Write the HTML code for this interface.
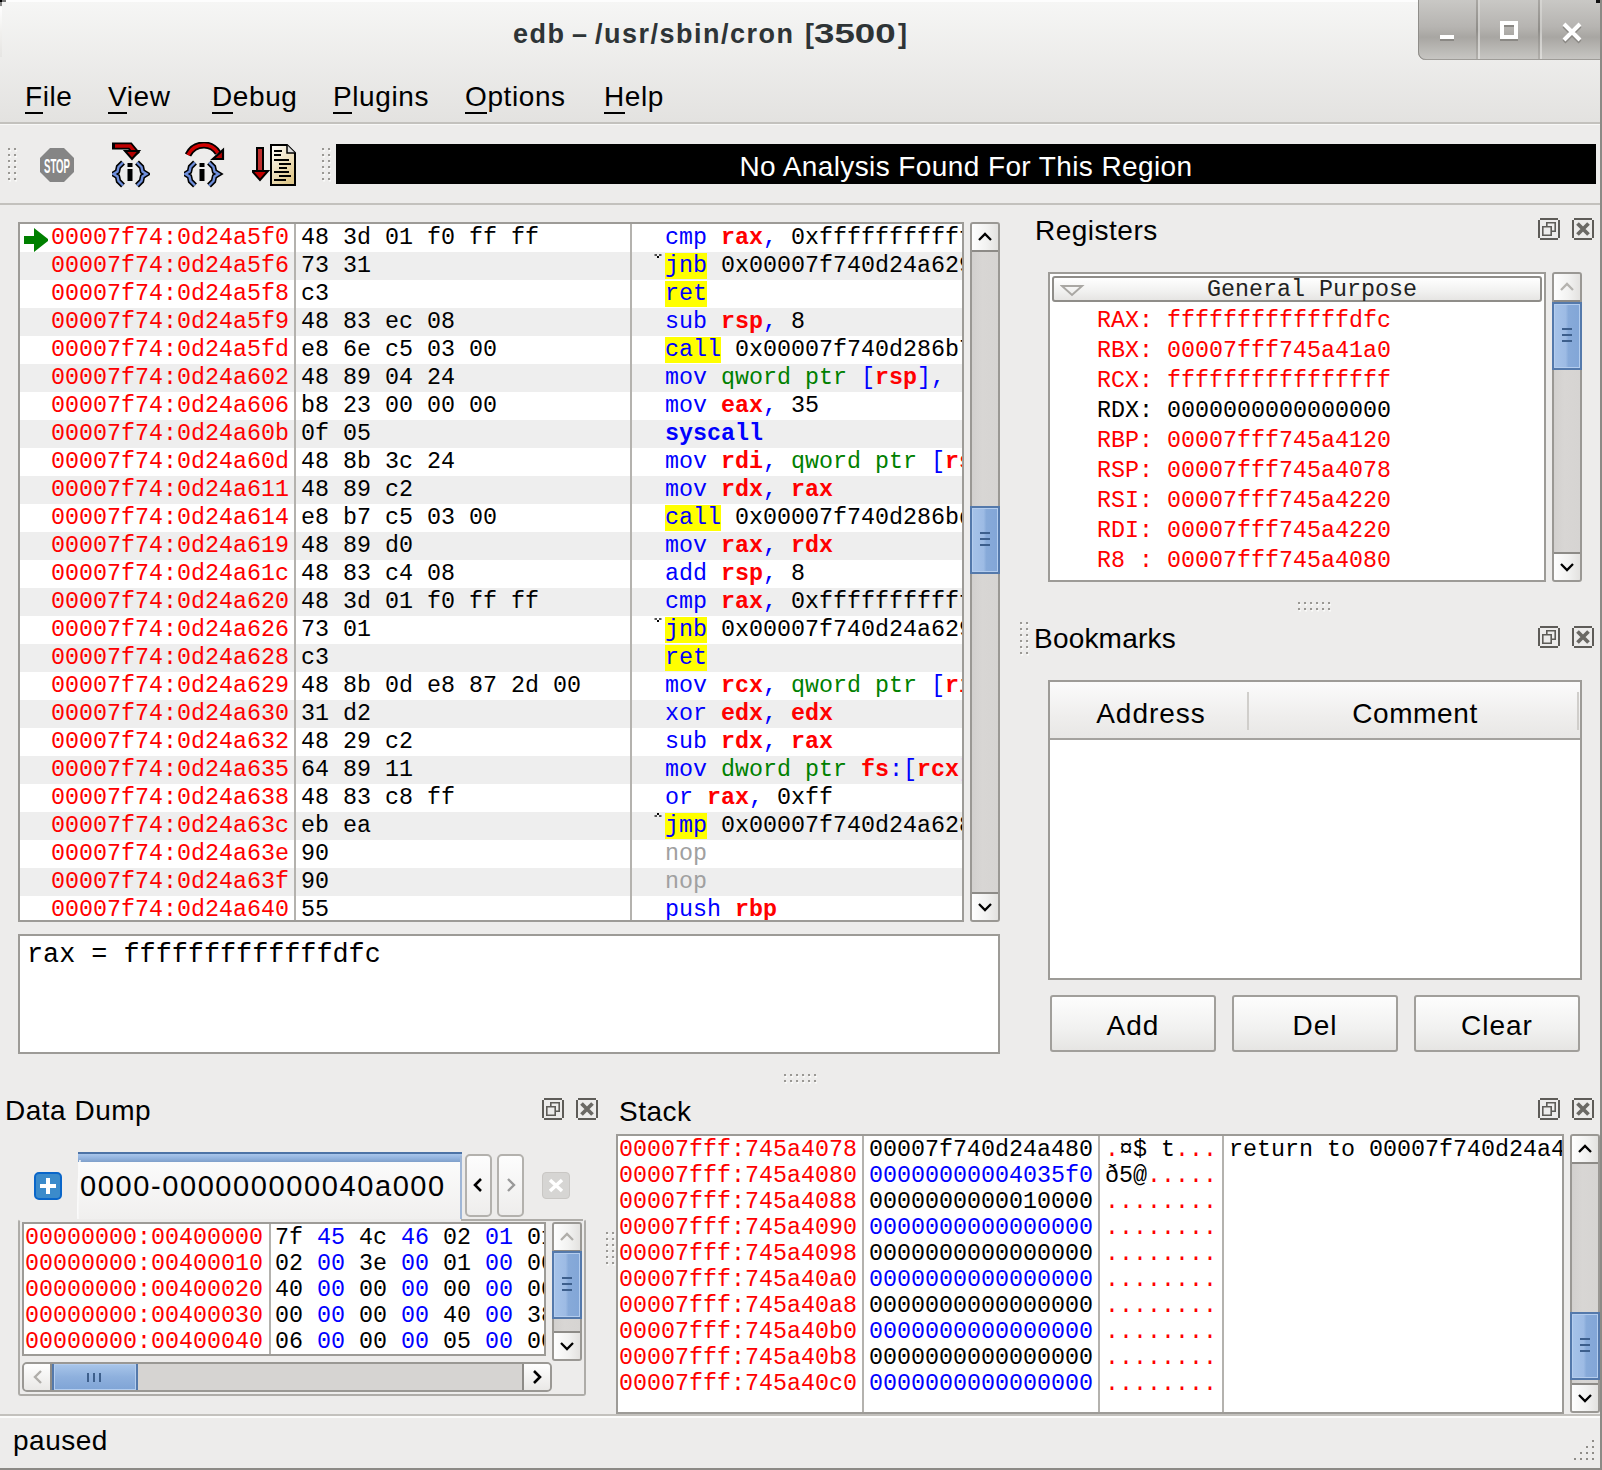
<!DOCTYPE html><html><head><meta charset="utf-8"><style>
*{box-sizing:border-box;margin:0;padding:0}
html,body{width:1602px;height:1470px;overflow:hidden;background:#edeceb}
body{position:relative;font-family:"Liberation Sans",sans-serif;color:#000}
.a{position:absolute}
.m{font-family:"Liberation Mono",monospace;font-size:23.33px;white-space:pre;line-height:28px}
.ui{font-family:"Liberation Sans",sans-serif;font-size:28px;white-space:pre;letter-spacing:0.5px;line-height:32px}
.menu{top:81px;letter-spacing:0.6px}
.menu u{text-decoration:none;border-bottom:2px solid #000;padding-bottom:0px}
.frame{border:2px solid #9d9b97;background:#fff;overflow:hidden}
.r{color:#f00}.b{color:#00f}.g{color:#008000}.k{color:#000}.gy{color:#a0a0a0}
.bo{font-weight:bold}
.hl{background:#ff0}
.row{position:absolute;left:0;height:28px;width:100%}
.alt{background:#eeeeee}
.sbv{position:absolute;border:2px solid #9d9b97;background:#d6d4d2;border-radius:4px}
.sbbtn{position:absolute;left:0;width:100%;background:linear-gradient(90deg,#fff,#f3f3f2 50%,#e2e1df);}
.thumb{position:absolute;background:linear-gradient(90deg,#a6c3e9,#9dbbe4 45%,#87aad9 55%,#82a6d7);border:2px solid #5479ab;box-shadow:inset 0 0 0 1px #b4cdee}
.dockic{position:absolute;width:22px;height:22px;border:2px solid #5e5c58;border-radius:2px}
</style></head><body>
<div class="a" style="left:0;top:0;width:1602px;height:123px;background:linear-gradient(#f6f6f5,#e3e2e0)"></div>
<div class="a" style="left:513px;top:19px;line-height:30px;font-weight:bold;font-size:27px;letter-spacing:1.5px;color:#2e3436;white-space:pre;transform:scaleX(1);transform-origin:0 0">edb</div>
<div class="a" style="left:572px;top:19px;line-height:30px;font-weight:bold;font-size:27px;letter-spacing:0px;color:#2e3436;white-space:pre;transform:scaleX(1);transform-origin:0 0">–</div>
<div class="a" style="left:595px;top:19px;line-height:30px;font-weight:bold;font-size:27px;letter-spacing:1.5px;color:#2e3436;white-space:pre;transform:scaleX(1);transform-origin:0 0">/usr/sbin/cron</div>
<div class="a" style="left:805px;top:19px;line-height:30px;font-weight:bold;font-size:27px;letter-spacing:0px;color:#2e3436;white-space:pre;transform:scaleX(1);transform-origin:0 0">[</div>
<div class="a" style="left:814px;top:19px;line-height:30px;font-weight:bold;font-size:27px;letter-spacing:0px;color:#2e3436;white-space:pre;transform:scaleX(1.36);transform-origin:0 0">3500</div>
<div class="a" style="left:898px;top:19px;line-height:30px;font-weight:bold;font-size:27px;letter-spacing:0px;color:#2e3436;white-space:pre;transform:scaleX(1);transform-origin:0 0">]</div>
<div class="a" id="wb" style="left:1418px;top:0;width:182px;height:60px;border-bottom-left-radius:8px;background:linear-gradient(#c9c8c5,#b6b4b1 45%,#a8a6a2 62%,#c8c7c4);box-shadow:inset 1px 0 0 #8f8d89, inset 0 -1px 0 #9e9c98"></div>
<div class="a ui menu" style="left:25px"><u>F</u>ile</div>
<div class="a ui menu" style="left:108px"><u>V</u>iew</div>
<div class="a ui menu" style="left:212px"><u>D</u>ebug</div>
<div class="a ui menu" style="left:333px"><u>P</u>lugins</div>
<div class="a ui menu" style="left:465px"><u>O</u>ptions</div>
<div class="a ui menu" style="left:604px"><u>H</u>elp</div>
<div class="a" style="left:0;top:122px;width:1600px;height:2px;background:#c3c1bd"></div>
<div class="a" style="left:0;top:124px;width:1600px;height:1px;background:#f8f8f7"></div>
<div class="a" style="left:0;top:203px;width:1600px;height:2px;background:#c3c1bd"></div>
<div class="a" style="left:336px;top:144px;width:1260px;height:40px;background:#000"></div>
<div class="a ui" style="left:336px;top:151px;width:1260px;text-align:center;color:#fff;letter-spacing:0.4px">No Analysis Found For This Region</div>
<svg class="a" style="left:8px;top:148px" width="12" height="36"><rect x="1" y="2" width="2" height="1.5" fill="#fbfbfa"/><rect x="0" y="0" width="2" height="2" fill="#9a9894"/><rect x="1" y="8" width="2" height="1.5" fill="#fbfbfa"/><rect x="0" y="6" width="2" height="2" fill="#9a9894"/><rect x="1" y="14" width="2" height="1.5" fill="#fbfbfa"/><rect x="0" y="12" width="2" height="2" fill="#9a9894"/><rect x="1" y="20" width="2" height="1.5" fill="#fbfbfa"/><rect x="0" y="18" width="2" height="2" fill="#9a9894"/><rect x="1" y="26" width="2" height="1.5" fill="#fbfbfa"/><rect x="0" y="24" width="2" height="2" fill="#9a9894"/><rect x="1" y="32" width="2" height="1.5" fill="#fbfbfa"/><rect x="0" y="30" width="2" height="2" fill="#9a9894"/><rect x="7" y="2" width="2" height="1.5" fill="#fbfbfa"/><rect x="6" y="0" width="2" height="2" fill="#9a9894"/><rect x="7" y="8" width="2" height="1.5" fill="#fbfbfa"/><rect x="6" y="6" width="2" height="2" fill="#9a9894"/><rect x="7" y="14" width="2" height="1.5" fill="#fbfbfa"/><rect x="6" y="12" width="2" height="2" fill="#9a9894"/><rect x="7" y="20" width="2" height="1.5" fill="#fbfbfa"/><rect x="6" y="18" width="2" height="2" fill="#9a9894"/><rect x="7" y="26" width="2" height="1.5" fill="#fbfbfa"/><rect x="6" y="24" width="2" height="2" fill="#9a9894"/><rect x="7" y="32" width="2" height="1.5" fill="#fbfbfa"/><rect x="6" y="30" width="2" height="2" fill="#9a9894"/></svg>
<svg class="a" style="left:322px;top:148px" width="12" height="36"><rect x="1" y="2" width="2" height="1.5" fill="#fbfbfa"/><rect x="0" y="0" width="2" height="2" fill="#9a9894"/><rect x="1" y="8" width="2" height="1.5" fill="#fbfbfa"/><rect x="0" y="6" width="2" height="2" fill="#9a9894"/><rect x="1" y="14" width="2" height="1.5" fill="#fbfbfa"/><rect x="0" y="12" width="2" height="2" fill="#9a9894"/><rect x="1" y="20" width="2" height="1.5" fill="#fbfbfa"/><rect x="0" y="18" width="2" height="2" fill="#9a9894"/><rect x="1" y="26" width="2" height="1.5" fill="#fbfbfa"/><rect x="0" y="24" width="2" height="2" fill="#9a9894"/><rect x="1" y="32" width="2" height="1.5" fill="#fbfbfa"/><rect x="0" y="30" width="2" height="2" fill="#9a9894"/><rect x="7" y="2" width="2" height="1.5" fill="#fbfbfa"/><rect x="6" y="0" width="2" height="2" fill="#9a9894"/><rect x="7" y="8" width="2" height="1.5" fill="#fbfbfa"/><rect x="6" y="6" width="2" height="2" fill="#9a9894"/><rect x="7" y="14" width="2" height="1.5" fill="#fbfbfa"/><rect x="6" y="12" width="2" height="2" fill="#9a9894"/><rect x="7" y="20" width="2" height="1.5" fill="#fbfbfa"/><rect x="6" y="18" width="2" height="2" fill="#9a9894"/><rect x="7" y="26" width="2" height="1.5" fill="#fbfbfa"/><rect x="6" y="24" width="2" height="2" fill="#9a9894"/><rect x="7" y="32" width="2" height="1.5" fill="#fbfbfa"/><rect x="6" y="30" width="2" height="2" fill="#9a9894"/></svg>
<svg class="a" style="left:40px;top:148px" width="34" height="34" viewBox="0 0 34 34"><path d="M10 0H24L34 10V24L24 34H10L0 24V10Z" fill="#858585"/><text x="4" y="25" font-family="Liberation Sans" font-weight="bold" font-size="20" fill="#fff" textLength="26" lengthAdjust="spacingAndGlyphs">STOP</text></svg>
<svg class="a" style="left:112px;top:142px" width="38" height="46" viewBox="0 0 38 46"><path d="M2 4H18L23 10" fill="none" stroke="#000" stroke-width="7" stroke-linecap="square"/><path d="M3 4H18L23 10" fill="none" stroke="#c00000" stroke-width="3.5"/><path d="M13 9H27L20 17Z" fill="#b00000" stroke="#000" stroke-width="2" stroke-linejoin="miter"/><g transform="translate(0,19)"><g transform="translate(0,0)"><g fill="none" stroke-linejoin="miter" stroke-linecap="butt"><polyline points="11,1.5 6.5,6 5.5,10.5 1.5,13 5.5,15.5 6.5,20 11,24.5" stroke="#000" stroke-width="5.5"/><polyline points="11,1.5 6.5,6 5.5,10.5 1.5,13 5.5,15.5 6.5,20 11,24.5" stroke="#6f8fdc" stroke-width="2.4"/><polyline points="25,1.5 29.5,6 30.5,10.5 34.5,13 30.5,15.5 29.5,20 25,24.5" stroke="#000" stroke-width="5.5"/><polyline points="25,1.5 29.5,6 30.5,10.5 34.5,13 30.5,15.5 29.5,20 25,24.5" stroke="#6f8fdc" stroke-width="2.4"/></g><rect x="15.5" y="2" width="5" height="4" fill="#000"/><rect x="15.5" y="8" width="5" height="12" fill="#000"/></g></g></svg>
<svg class="a" style="left:184px;top:142px" width="42" height="46" viewBox="0 0 42 46"><path d="M4 13Q9 3 20 3Q29 3 34 11" fill="none" stroke="#000" stroke-width="7"/><path d="M4 13Q9 3 20 3Q29 3 34 11" fill="none" stroke="#d00000" stroke-width="3.5"/><path d="M39 8V17H29Z" fill="#b00000" stroke="#000" stroke-width="2.2"/><g transform="translate(0,19)"><g transform="translate(0,0)"><g fill="none" stroke-linejoin="miter" stroke-linecap="butt"><polyline points="11,1.5 6.5,6 5.5,10.5 1.5,13 5.5,15.5 6.5,20 11,24.5" stroke="#000" stroke-width="5.5"/><polyline points="11,1.5 6.5,6 5.5,10.5 1.5,13 5.5,15.5 6.5,20 11,24.5" stroke="#6f8fdc" stroke-width="2.4"/><polyline points="25,1.5 29.5,6 30.5,10.5 34.5,13 30.5,15.5 29.5,20 25,24.5" stroke="#000" stroke-width="5.5"/><polyline points="25,1.5 29.5,6 30.5,10.5 34.5,13 30.5,15.5 29.5,20 25,24.5" stroke="#6f8fdc" stroke-width="2.4"/></g><rect x="15.5" y="2" width="5" height="4" fill="#000"/><rect x="15.5" y="8" width="5" height="12" fill="#000"/></g></g></svg>
<svg class="a" style="left:252px;top:144px" width="46" height="44" viewBox="0 0 46 44"><rect x="5" y="4" width="6" height="24" fill="#c03030" stroke="#000" stroke-width="2"/><path d="M0 27H16L8 36Z" fill="#c00000" stroke="#000" stroke-width="2"/><defs><linearGradient id="dg" x1="0" y1="0" x2="0.6" y2="1"><stop offset="0" stop-color="#fff"/><stop offset="1" stop-color="#e0c98e"/></linearGradient></defs><path d="M19 1H35L43 9V41H19Z" fill="url(#dg)" stroke="#000" stroke-width="2"/><path d="M35 1V9H43" fill="#ddd" stroke="#000" stroke-width="1.5"/><g fill="#000"><rect x="22" y="6" width="8" height="2"/><rect x="22" y="10" width="7" height="2"/><rect x="22" y="15" width="15" height="2"/><rect x="27" y="19" width="12" height="2"/><rect x="27" y="23" width="8" height="2"/><rect x="22" y="27" width="15" height="2"/><rect x="27" y="31" width="12" height="2"/><rect x="22" y="35" width="12" height="2"/></g></svg>
<div class="a" style="left:1476px;top:0;width:2px;height:59px;background:linear-gradient(#a9a7a3,#8f8d89 50%,#b2b0ac)"></div><div class="a" style="left:1478px;top:0;width:2px;height:59px;background:linear-gradient(#d6d5d2,#c9c8c5 50%,#dcdbd8)"></div>
<div class="a" style="left:1538px;top:0;width:2px;height:59px;background:linear-gradient(#a9a7a3,#8f8d89 50%,#b2b0ac)"></div><div class="a" style="left:1540px;top:0;width:2px;height:59px;background:linear-gradient(#d6d5d2,#c9c8c5 50%,#dcdbd8)"></div>
<div class="a" style="left:1440px;top:37px;width:14px;height:4px;background:#8a8884"></div><div class="a" style="left:1440px;top:35px;width:14px;height:4px;background:#fff"></div>
<div class="a" style="left:1500px;top:23px;width:18px;height:18px;border:4px solid #8a8884"></div><div class="a" style="left:1500px;top:21px;width:18px;height:18px;border:4px solid #fff"></div>
<svg class="a" style="left:1560px;top:20px" width="24" height="24"><path d="M4 6L20 22M20 6L4 22" stroke="#8a8884" stroke-width="4"/><path d="M4 4L20 20M20 4L4 20" stroke="#fff" stroke-width="4"/></svg>
<div class="a frame" style="left:18px;top:222px;width:946px;height:700px">
<div class="row" style="top:0px"></div>
<div class="a m r" style="left:31px;top:0px">00007f74:0d24a5f0</div>
<div class="a m k" style="left:281px;top:0px">48 3d 01 f0 ff ff</div>
<div class="a m" style="left:645px;top:0px"><span class="b">cmp</span> <span class="r bo">rax</span><span class="b">,</span> <span class="k">0xfffffffffffff001</span></div>
<div class="row alt" style="top:28px"></div>
<div class="a m r" style="left:31px;top:28px">00007f74:0d24a5f6</div>
<div class="a m k" style="left:281px;top:28px">73 31</div>
<svg class="a" style="left:634px;top:30px" width="8" height="6"><rect x="3" y="2" width="2" height="2" fill="#000"/><rect x="0.5" y="0" width="2.5" height="2" fill="#555"/><rect x="5" y="0" width="2.5" height="2" fill="#555"/></svg>
<div class="a m" style="left:645px;top:28px"><span class="b hl">jnb</span> <span class="k">0x00007f740d24a629</span></div>
<div class="row" style="top:56px"></div>
<div class="a m r" style="left:31px;top:56px">00007f74:0d24a5f8</div>
<div class="a m k" style="left:281px;top:56px">c3</div>
<div class="a m" style="left:645px;top:56px"><span class="b hl">ret</span></div>
<div class="row alt" style="top:84px"></div>
<div class="a m r" style="left:31px;top:84px">00007f74:0d24a5f9</div>
<div class="a m k" style="left:281px;top:84px">48 83 ec 08</div>
<div class="a m" style="left:645px;top:84px"><span class="b">sub</span> <span class="r bo">rsp</span><span class="b">,</span> <span class="k">8</span></div>
<div class="row" style="top:112px"></div>
<div class="a m r" style="left:31px;top:112px">00007f74:0d24a5fd</div>
<div class="a m k" style="left:281px;top:112px">e8 6e c5 03 00</div>
<div class="a m" style="left:645px;top:112px"><span class="b hl">call</span> <span class="k">0x00007f740d286b70</span></div>
<div class="row alt" style="top:140px"></div>
<div class="a m r" style="left:31px;top:140px">00007f74:0d24a602</div>
<div class="a m k" style="left:281px;top:140px">48 89 04 24</div>
<div class="a m" style="left:645px;top:140px"><span class="b">mov</span> <span class="g">qword ptr</span> <span class="b">[</span><span class="r bo">rsp</span><span class="b">]</span><span class="b">,</span></div>
<div class="row" style="top:168px"></div>
<div class="a m r" style="left:31px;top:168px">00007f74:0d24a606</div>
<div class="a m k" style="left:281px;top:168px">b8 23 00 00 00</div>
<div class="a m" style="left:645px;top:168px"><span class="b">mov</span> <span class="r bo">eax</span><span class="b">,</span> <span class="k">35</span></div>
<div class="row alt" style="top:196px"></div>
<div class="a m r" style="left:31px;top:196px">00007f74:0d24a60b</div>
<div class="a m k" style="left:281px;top:196px">0f 05</div>
<div class="a m" style="left:645px;top:196px"><span class="b bo">syscall</span></div>
<div class="row" style="top:224px"></div>
<div class="a m r" style="left:31px;top:224px">00007f74:0d24a60d</div>
<div class="a m k" style="left:281px;top:224px">48 8b 3c 24</div>
<div class="a m" style="left:645px;top:224px"><span class="b">mov</span> <span class="r bo">rdi</span><span class="b">,</span> <span class="g">qword ptr</span> <span class="b">[</span><span class="r bo">rsp</span><span class="b">]</span></div>
<div class="row alt" style="top:252px"></div>
<div class="a m r" style="left:31px;top:252px">00007f74:0d24a611</div>
<div class="a m k" style="left:281px;top:252px">48 89 c2</div>
<div class="a m" style="left:645px;top:252px"><span class="b">mov</span> <span class="r bo">rdx</span><span class="b">,</span> <span class="r bo">rax</span></div>
<div class="row" style="top:280px"></div>
<div class="a m r" style="left:31px;top:280px">00007f74:0d24a614</div>
<div class="a m k" style="left:281px;top:280px">e8 b7 c5 03 00</div>
<div class="a m" style="left:645px;top:280px"><span class="b hl">call</span> <span class="k">0x00007f740d286bd0</span></div>
<div class="row alt" style="top:308px"></div>
<div class="a m r" style="left:31px;top:308px">00007f74:0d24a619</div>
<div class="a m k" style="left:281px;top:308px">48 89 d0</div>
<div class="a m" style="left:645px;top:308px"><span class="b">mov</span> <span class="r bo">rax</span><span class="b">,</span> <span class="r bo">rdx</span></div>
<div class="row" style="top:336px"></div>
<div class="a m r" style="left:31px;top:336px">00007f74:0d24a61c</div>
<div class="a m k" style="left:281px;top:336px">48 83 c4 08</div>
<div class="a m" style="left:645px;top:336px"><span class="b">add</span> <span class="r bo">rsp</span><span class="b">,</span> <span class="k">8</span></div>
<div class="row alt" style="top:364px"></div>
<div class="a m r" style="left:31px;top:364px">00007f74:0d24a620</div>
<div class="a m k" style="left:281px;top:364px">48 3d 01 f0 ff ff</div>
<div class="a m" style="left:645px;top:364px"><span class="b">cmp</span> <span class="r bo">rax</span><span class="b">,</span> <span class="k">0xfffffffffffff001</span></div>
<div class="row" style="top:392px"></div>
<div class="a m r" style="left:31px;top:392px">00007f74:0d24a626</div>
<div class="a m k" style="left:281px;top:392px">73 01</div>
<svg class="a" style="left:634px;top:394px" width="8" height="6"><rect x="3" y="2" width="2" height="2" fill="#000"/><rect x="0.5" y="0" width="2.5" height="2" fill="#555"/><rect x="5" y="0" width="2.5" height="2" fill="#555"/></svg>
<div class="a m" style="left:645px;top:392px"><span class="b hl">jnb</span> <span class="k">0x00007f740d24a629</span></div>
<div class="row alt" style="top:420px"></div>
<div class="a m r" style="left:31px;top:420px">00007f74:0d24a628</div>
<div class="a m k" style="left:281px;top:420px">c3</div>
<div class="a m" style="left:645px;top:420px"><span class="b hl">ret</span></div>
<div class="row" style="top:448px"></div>
<div class="a m r" style="left:31px;top:448px">00007f74:0d24a629</div>
<div class="a m k" style="left:281px;top:448px">48 8b 0d e8 87 2d 00</div>
<div class="a m" style="left:645px;top:448px"><span class="b">mov</span> <span class="r bo">rcx</span><span class="b">,</span> <span class="g">qword ptr</span> <span class="b">[</span><span class="r bo">rip</span></div>
<div class="row alt" style="top:476px"></div>
<div class="a m r" style="left:31px;top:476px">00007f74:0d24a630</div>
<div class="a m k" style="left:281px;top:476px">31 d2</div>
<div class="a m" style="left:645px;top:476px"><span class="b">xor</span> <span class="r bo">edx</span><span class="b">,</span> <span class="r bo">edx</span></div>
<div class="row" style="top:504px"></div>
<div class="a m r" style="left:31px;top:504px">00007f74:0d24a632</div>
<div class="a m k" style="left:281px;top:504px">48 29 c2</div>
<div class="a m" style="left:645px;top:504px"><span class="b">sub</span> <span class="r bo">rdx</span><span class="b">,</span> <span class="r bo">rax</span></div>
<div class="row alt" style="top:532px"></div>
<div class="a m r" style="left:31px;top:532px">00007f74:0d24a635</div>
<div class="a m k" style="left:281px;top:532px">64 89 11</div>
<div class="a m" style="left:645px;top:532px"><span class="b">mov</span> <span class="g">dword ptr</span> <span class="r bo">fs</span><span class="b">:</span><span class="b">[</span><span class="r bo">rcx</span><span class="b">]</span></div>
<div class="row" style="top:560px"></div>
<div class="a m r" style="left:31px;top:560px">00007f74:0d24a638</div>
<div class="a m k" style="left:281px;top:560px">48 83 c8 ff</div>
<div class="a m" style="left:645px;top:560px"><span class="b">or</span> <span class="r bo">rax</span><span class="b">,</span> <span class="k">0xff</span></div>
<div class="row alt" style="top:588px"></div>
<div class="a m r" style="left:31px;top:588px">00007f74:0d24a63c</div>
<div class="a m k" style="left:281px;top:588px">eb ea</div>
<svg class="a" style="left:634px;top:589px" width="8" height="6"><rect x="3" y="0" width="2" height="2" fill="#000"/><rect x="0.5" y="2" width="2.5" height="2" fill="#555"/><rect x="5" y="2" width="2.5" height="2" fill="#555"/></svg>
<div class="a m" style="left:645px;top:588px"><span class="b hl">jmp</span> <span class="k">0x00007f740d24a628</span></div>
<div class="row" style="top:616px"></div>
<div class="a m r" style="left:31px;top:616px">00007f74:0d24a63e</div>
<div class="a m k" style="left:281px;top:616px">90</div>
<div class="a m" style="left:645px;top:616px"><span class="gy">nop</span></div>
<div class="row alt" style="top:644px"></div>
<div class="a m r" style="left:31px;top:644px">00007f74:0d24a63f</div>
<div class="a m k" style="left:281px;top:644px">90</div>
<div class="a m" style="left:645px;top:644px"><span class="gy">nop</span></div>
<div class="row" style="top:672px"></div>
<div class="a m r" style="left:31px;top:672px">00007f74:0d24a640</div>
<div class="a m k" style="left:281px;top:672px">55</div>
<div class="a m" style="left:645px;top:672px"><span class="b">push</span> <span class="r bo">rbp</span></div>
<div class="a" style="left:274px;top:0;width:2px;height:700px;background:#b4b2ae"></div>
<div class="a" style="left:610px;top:0;width:2px;height:700px;background:#b4b2ae"></div>
<svg class="a" style="left:4px;top:4px" width="24" height="24" viewBox="0 0 24 24"><path d="M0 8H10V0L24 11V13L10 24V16H0Z" fill="#008000"/></svg>
</div>
<div class="a" style="left:970px;top:222px;width:30px;height:700px;border:2px solid #9a9894;border-radius:3px;background:linear-gradient(90deg,#d2d0ce,#d8d6d4 40%,#d6d4d2);overflow:hidden">
<div class="a" style="left:0;top:0;width:26px;height:28px;background:linear-gradient(90deg,#fefefe,#f2f2f1 55%,#e3e2e0);border-bottom:2px solid #8d8b87"></div>
<div class="a" style="left:0;top:668px;width:26px;height:28px;background:linear-gradient(90deg,#fefefe,#f2f2f1 55%,#e3e2e0);border-top:2px solid #8d8b87"></div>
<svg class="a" style="left:0;top:0" width="26" height="30"><polyline points="7.0,16.0 13.0,10.0 19.0,16.0" fill="none" stroke="#000" stroke-width="2.3"/></svg>
<svg class="a" style="left:0;top:668px" width="26" height="30"><polyline points="7.0,12.0 13.0,18.0 19.0,12.0" fill="none" stroke="#000" stroke-width="2.3"/></svg>
</div>
<div class="thumb" style="left:970px;top:506px;width:30px;height:68px"></div>
<div class="a" style="left:980.0px;top:532.0px;width:10px;height:2px;background:#3d5f8c"></div>
<div class="a" style="left:980.0px;top:538.0px;width:10px;height:2px;background:#3d5f8c"></div>
<div class="a" style="left:980.0px;top:544.0px;width:10px;height:2px;background:#3d5f8c"></div>
<div class="a frame" style="left:18px;top:934px;width:982px;height:120px"></div>
<div class="a m" style="left:27px;top:940px;font-size:26.8px;line-height:30px">rax = fffffffffffffdfc</div>
<div class="a ui" style="left:1035px;top:215px">Registers</div>
<svg class="a" style="left:1538px;top:218px" width="22" height="22" viewBox="0 0 22 22"><path d="M2 1H20M2 21H20M1 2V20M21 2V20" stroke="#5e5c58" stroke-width="2" fill="none"/><path d="M4.8 8.8H13.2V17.2H4.8Z M8.8 8.8V4.8H17.2V13.2H13.2" stroke="#5e5c58" stroke-width="1.6" fill="none"/></svg>
<svg class="a" style="left:1572px;top:218px" width="22" height="22" viewBox="0 0 22 22"><path d="M2 1H20M2 21H20M1 2V20M21 2V20" stroke="#5e5c58" stroke-width="2" fill="none"/><path d="M5.5 5.5L16.5 16.5M16.5 5.5L5.5 16.5" stroke="#6b6965" stroke-width="3.8" fill="none"/></svg>
<div class="a frame" style="left:1048px;top:272px;width:498px;height:310px">
<div class="a" style="left:2px;top:2px;width:490px;height:26px;border:2px solid #8f8d89;border-radius:3px;background:linear-gradient(#ffffff,#f1f1f0 60%,#e6e5e3)"></div>
<svg class="a" style="left:10px;top:10px" width="26" height="14"><path d="M2 2H22L12 11Z" fill="none" stroke="#a9a7a3" stroke-width="2"/></svg>
<div class="a m" style="left:157px;top:2px;font-size:23.33px;color:#222">General Purpose</div>
<div class="a m r" style="left:47px;top:33px">RAX: fffffffffffffdfc</div>
<div class="a m r" style="left:47px;top:63px">RBX: 00007fff745a41a0</div>
<div class="a m r" style="left:47px;top:93px">RCX: ffffffffffffffff</div>
<div class="a m k" style="left:47px;top:123px">RDX: 0000000000000000</div>
<div class="a m r" style="left:47px;top:153px">RBP: 00007fff745a4120</div>
<div class="a m r" style="left:47px;top:183px">RSP: 00007fff745a4078</div>
<div class="a m r" style="left:47px;top:213px">RSI: 00007fff745a4220</div>
<div class="a m r" style="left:47px;top:243px">RDI: 00007fff745a4220</div>
<div class="a m r" style="left:47px;top:273px">R8 : 00007fff745a4080</div>
</div>
<div class="a" style="left:1552px;top:272px;width:30px;height:310px;border:2px solid #9a9894;border-radius:3px;background:linear-gradient(90deg,#d2d0ce,#d8d6d4 40%,#d6d4d2);overflow:hidden">
<div class="a" style="left:0;top:0;width:26px;height:28px;background:linear-gradient(90deg,#fefefe,#f2f2f1 55%,#e3e2e0);border-bottom:2px solid #8d8b87"></div>
<div class="a" style="left:0;top:278px;width:26px;height:28px;background:linear-gradient(90deg,#fefefe,#f2f2f1 55%,#e3e2e0);border-top:2px solid #8d8b87"></div>
<svg class="a" style="left:0;top:0" width="26" height="30"><polyline points="7.0,16.0 13.0,10.0 19.0,16.0" fill="none" stroke="#b5b3af" stroke-width="2.3"/></svg>
<svg class="a" style="left:0;top:278px" width="26" height="30"><polyline points="7.0,12.0 13.0,18.0 19.0,12.0" fill="none" stroke="#000" stroke-width="2.3"/></svg>
</div>
<div class="thumb" style="left:1552px;top:302px;width:30px;height:68px"></div>
<div class="a" style="left:1562.0px;top:328.0px;width:10px;height:2px;background:#3d5f8c"></div>
<div class="a" style="left:1562.0px;top:334.0px;width:10px;height:2px;background:#3d5f8c"></div>
<div class="a" style="left:1562.0px;top:340.0px;width:10px;height:2px;background:#3d5f8c"></div>
<svg class="a" style="left:1298px;top:602px" width="36" height="12"><rect x="1" y="2" width="2" height="1.5" fill="#fbfbfa"/><rect x="0" y="0" width="2" height="2" fill="#9a9894"/><rect x="1" y="8" width="2" height="1.5" fill="#fbfbfa"/><rect x="0" y="6" width="2" height="2" fill="#9a9894"/><rect x="7" y="2" width="2" height="1.5" fill="#fbfbfa"/><rect x="6" y="0" width="2" height="2" fill="#9a9894"/><rect x="7" y="8" width="2" height="1.5" fill="#fbfbfa"/><rect x="6" y="6" width="2" height="2" fill="#9a9894"/><rect x="13" y="2" width="2" height="1.5" fill="#fbfbfa"/><rect x="12" y="0" width="2" height="2" fill="#9a9894"/><rect x="13" y="8" width="2" height="1.5" fill="#fbfbfa"/><rect x="12" y="6" width="2" height="2" fill="#9a9894"/><rect x="19" y="2" width="2" height="1.5" fill="#fbfbfa"/><rect x="18" y="0" width="2" height="2" fill="#9a9894"/><rect x="19" y="8" width="2" height="1.5" fill="#fbfbfa"/><rect x="18" y="6" width="2" height="2" fill="#9a9894"/><rect x="25" y="2" width="2" height="1.5" fill="#fbfbfa"/><rect x="24" y="0" width="2" height="2" fill="#9a9894"/><rect x="25" y="8" width="2" height="1.5" fill="#fbfbfa"/><rect x="24" y="6" width="2" height="2" fill="#9a9894"/><rect x="31" y="2" width="2" height="1.5" fill="#fbfbfa"/><rect x="30" y="0" width="2" height="2" fill="#9a9894"/><rect x="31" y="8" width="2" height="1.5" fill="#fbfbfa"/><rect x="30" y="6" width="2" height="2" fill="#9a9894"/></svg>
<svg class="a" style="left:1020px;top:622px" width="12" height="36"><rect x="1" y="2" width="2" height="1.5" fill="#fbfbfa"/><rect x="0" y="0" width="2" height="2" fill="#9a9894"/><rect x="1" y="8" width="2" height="1.5" fill="#fbfbfa"/><rect x="0" y="6" width="2" height="2" fill="#9a9894"/><rect x="1" y="14" width="2" height="1.5" fill="#fbfbfa"/><rect x="0" y="12" width="2" height="2" fill="#9a9894"/><rect x="1" y="20" width="2" height="1.5" fill="#fbfbfa"/><rect x="0" y="18" width="2" height="2" fill="#9a9894"/><rect x="1" y="26" width="2" height="1.5" fill="#fbfbfa"/><rect x="0" y="24" width="2" height="2" fill="#9a9894"/><rect x="1" y="32" width="2" height="1.5" fill="#fbfbfa"/><rect x="0" y="30" width="2" height="2" fill="#9a9894"/><rect x="7" y="2" width="2" height="1.5" fill="#fbfbfa"/><rect x="6" y="0" width="2" height="2" fill="#9a9894"/><rect x="7" y="8" width="2" height="1.5" fill="#fbfbfa"/><rect x="6" y="6" width="2" height="2" fill="#9a9894"/><rect x="7" y="14" width="2" height="1.5" fill="#fbfbfa"/><rect x="6" y="12" width="2" height="2" fill="#9a9894"/><rect x="7" y="20" width="2" height="1.5" fill="#fbfbfa"/><rect x="6" y="18" width="2" height="2" fill="#9a9894"/><rect x="7" y="26" width="2" height="1.5" fill="#fbfbfa"/><rect x="6" y="24" width="2" height="2" fill="#9a9894"/><rect x="7" y="32" width="2" height="1.5" fill="#fbfbfa"/><rect x="6" y="30" width="2" height="2" fill="#9a9894"/></svg>
<div class="a ui" style="left:1034px;top:623px;letter-spacing:0.2px">Bookmarks</div>
<svg class="a" style="left:1538px;top:626px" width="22" height="22" viewBox="0 0 22 22"><path d="M2 1H20M2 21H20M1 2V20M21 2V20" stroke="#5e5c58" stroke-width="2" fill="none"/><path d="M4.8 8.8H13.2V17.2H4.8Z M8.8 8.8V4.8H17.2V13.2H13.2" stroke="#5e5c58" stroke-width="1.6" fill="none"/></svg>
<svg class="a" style="left:1572px;top:626px" width="22" height="22" viewBox="0 0 22 22"><path d="M2 1H20M2 21H20M1 2V20M21 2V20" stroke="#5e5c58" stroke-width="2" fill="none"/><path d="M5.5 5.5L16.5 16.5M16.5 5.5L5.5 16.5" stroke="#6b6965" stroke-width="3.8" fill="none"/></svg>
<div class="a frame" style="left:1048px;top:680px;width:534px;height:300px">
<div class="a" style="left:0;top:0;width:530px;height:58px;background:linear-gradient(#fbfbfb,#efeeed 60%,#e8e7e5);border-bottom:2px solid #a4a29e"></div>
<div class="a" style="left:197px;top:10px;width:2px;height:38px;background:#d0cecb"></div>
<div class="a" style="left:527px;top:10px;width:2px;height:38px;background:#d0cecb"></div>
<div class="a ui" style="left:2px;top:16px;width:198px;text-align:center;letter-spacing:1px">Address</div>
<div class="a ui" style="left:200px;top:16px;width:330px;text-align:center;letter-spacing:0.6px">Comment</div>
</div>
<div class="a ui" style="left:1050px;top:995px;width:166px;height:57px;border:2px solid #a19f9b;border-radius:3px;background:linear-gradient(#fdfdfd,#f1f1f0 60%,#e6e5e3);text-align:center;line-height:57px;letter-spacing:1px">Add</div>
<div class="a ui" style="left:1232px;top:995px;width:166px;height:57px;border:2px solid #a19f9b;border-radius:3px;background:linear-gradient(#fdfdfd,#f1f1f0 60%,#e6e5e3);text-align:center;line-height:57px;letter-spacing:1px">Del</div>
<div class="a ui" style="left:1414px;top:995px;width:166px;height:57px;border:2px solid #a19f9b;border-radius:3px;background:linear-gradient(#fdfdfd,#f1f1f0 60%,#e6e5e3);text-align:center;line-height:57px;letter-spacing:1px">Clear</div>
<svg class="a" style="left:784px;top:1074px" width="36" height="12"><rect x="1" y="2" width="2" height="1.5" fill="#fbfbfa"/><rect x="0" y="0" width="2" height="2" fill="#9a9894"/><rect x="1" y="8" width="2" height="1.5" fill="#fbfbfa"/><rect x="0" y="6" width="2" height="2" fill="#9a9894"/><rect x="7" y="2" width="2" height="1.5" fill="#fbfbfa"/><rect x="6" y="0" width="2" height="2" fill="#9a9894"/><rect x="7" y="8" width="2" height="1.5" fill="#fbfbfa"/><rect x="6" y="6" width="2" height="2" fill="#9a9894"/><rect x="13" y="2" width="2" height="1.5" fill="#fbfbfa"/><rect x="12" y="0" width="2" height="2" fill="#9a9894"/><rect x="13" y="8" width="2" height="1.5" fill="#fbfbfa"/><rect x="12" y="6" width="2" height="2" fill="#9a9894"/><rect x="19" y="2" width="2" height="1.5" fill="#fbfbfa"/><rect x="18" y="0" width="2" height="2" fill="#9a9894"/><rect x="19" y="8" width="2" height="1.5" fill="#fbfbfa"/><rect x="18" y="6" width="2" height="2" fill="#9a9894"/><rect x="25" y="2" width="2" height="1.5" fill="#fbfbfa"/><rect x="24" y="0" width="2" height="2" fill="#9a9894"/><rect x="25" y="8" width="2" height="1.5" fill="#fbfbfa"/><rect x="24" y="6" width="2" height="2" fill="#9a9894"/><rect x="31" y="2" width="2" height="1.5" fill="#fbfbfa"/><rect x="30" y="0" width="2" height="2" fill="#9a9894"/><rect x="31" y="8" width="2" height="1.5" fill="#fbfbfa"/><rect x="30" y="6" width="2" height="2" fill="#9a9894"/></svg>
<div class="a ui" style="left:5px;top:1095px">Data Dump</div>
<svg class="a" style="left:542px;top:1098px" width="22" height="22" viewBox="0 0 22 22"><path d="M2 1H20M2 21H20M1 2V20M21 2V20" stroke="#5e5c58" stroke-width="2" fill="none"/><path d="M4.8 8.8H13.2V17.2H4.8Z M8.8 8.8V4.8H17.2V13.2H13.2" stroke="#5e5c58" stroke-width="1.6" fill="none"/></svg>
<svg class="a" style="left:576px;top:1098px" width="22" height="22" viewBox="0 0 22 22"><path d="M2 1H20M2 21H20M1 2V20M21 2V20" stroke="#5e5c58" stroke-width="2" fill="none"/><path d="M5.5 5.5L16.5 16.5M16.5 5.5L5.5 16.5" stroke="#6b6965" stroke-width="3.8" fill="none"/></svg>
<div class="a" style="left:78px;top:1152px;width:384px;height:68px;background:linear-gradient(#fdfdfd,#f0efee)"></div>
<div class="a" style="left:78px;top:1152px;width:384px;height:10px;background:linear-gradient(#4d73a6 0,#4d73a6 2px,#a9c6ea 2px,#93b4df 6px,#7f9fc9 10px)"></div>
<div class="a" style="left:460px;top:1156px;width:2px;height:64px;background:#9fb6d6"></div>
<svg class="a" style="left:76px;top:1160px" width="6" height="62"><path d="M4 0Q1 30 2 62" stroke="#fbfbfb" stroke-width="1.5" fill="none"/></svg>
<div class="a ui" style="left:80px;top:1170px;width:380px;overflow:hidden;letter-spacing:1.6px;font-size:29px">0000-000000000040a000</div>
<div class="a" style="left:34px;top:1172px;width:28px;height:28px;border-radius:5px;background:#3b8bcb;border:2px solid #0a66c9"></div>
<div class="a" style="left:40px;top:1184px;width:16px;height:4px;background:#fff"></div><div class="a" style="left:46px;top:1178px;width:4px;height:16px;background:#fff"></div>
<div class="a" style="left:465px;top:1154px;width:27px;height:63px;border:2px solid #b3b1ad;border-radius:5px;background:linear-gradient(#fdfdfd,#eeedec)"></div>
<div class="a" style="left:497px;top:1154px;width:27px;height:63px;border:2px solid #b3b1ad;border-radius:5px;background:linear-gradient(#fdfdfd,#eeedec)"></div>
<svg class="a" style="left:465px;top:1154px" width="27" height="63"><polyline points="16,25 10,31 16,37" fill="none" stroke="#000" stroke-width="2.6"/></svg>
<svg class="a" style="left:497px;top:1154px" width="27" height="63"><polyline points="11,25 17,31 11,37" fill="none" stroke="#999" stroke-width="2.4"/></svg>
<div class="a" style="left:542px;top:1172px;width:28px;height:27px;border-radius:4px;background:#d6d5d3;border:1px solid #c9c7c4"></div>
<svg class="a" style="left:542px;top:1172px" width="28" height="27"><path d="M8 8L20 19M20 8L8 19" stroke="#fff" stroke-width="3.5"/></svg>
<div class="a" style="left:18px;top:1219px;width:568px;height:177px;border:2px solid #aeaca8;border-top-color:transparent;border-radius:3px;background:#edeceb"></div>
<div class="a" style="left:461px;top:1219px;width:122px;height:2px;background:#aeaca8"></div>
<div class="a frame" style="left:22px;top:1222px;width:524px;height:134px">
<div class="a m r" style="left:1px;top:0px">00000000:00400000</div>
<div class="a m" style="left:251px;top:0px"><span class="k">7f</span> <span class="b">45</span> <span class="k">4c</span> <span class="b">46</span> <span class="k">02</span> <span class="b">01</span> <span class="k">01</span> </div>
<div class="a m r" style="left:1px;top:26px">00000000:00400010</div>
<div class="a m" style="left:251px;top:26px"><span class="k">02</span> <span class="b">00</span> <span class="k">3e</span> <span class="b">00</span> <span class="k">01</span> <span class="b">00</span> <span class="k">00</span> </div>
<div class="a m r" style="left:1px;top:52px">00000000:00400020</div>
<div class="a m" style="left:251px;top:52px"><span class="k">40</span> <span class="b">00</span> <span class="k">00</span> <span class="b">00</span> <span class="k">00</span> <span class="b">00</span> <span class="k">00</span> </div>
<div class="a m r" style="left:1px;top:78px">00000000:00400030</div>
<div class="a m" style="left:251px;top:78px"><span class="k">00</span> <span class="b">00</span> <span class="k">00</span> <span class="b">00</span> <span class="k">40</span> <span class="b">00</span> <span class="k">38</span> </div>
<div class="a m r" style="left:1px;top:104px">00000000:00400040</div>
<div class="a m" style="left:251px;top:104px"><span class="k">06</span> <span class="b">00</span> <span class="k">00</span> <span class="b">00</span> <span class="k">05</span> <span class="b">00</span> <span class="k">00</span> </div>
<div class="a" style="left:245px;top:0;width:2px;height:133px;background:#b4b2ae"></div>
</div>
<div class="a" style="left:552px;top:1222px;width:30px;height:139px;border:2px solid #9a9894;border-radius:3px;background:linear-gradient(90deg,#d2d0ce,#d8d6d4 40%,#d6d4d2);overflow:hidden">
<div class="a" style="left:0;top:0;width:26px;height:28px;background:linear-gradient(90deg,#fefefe,#f2f2f1 55%,#e3e2e0);border-bottom:2px solid #8d8b87"></div>
<div class="a" style="left:0;top:107px;width:26px;height:28px;background:linear-gradient(90deg,#fefefe,#f2f2f1 55%,#e3e2e0);border-top:2px solid #8d8b87"></div>
<svg class="a" style="left:0;top:0" width="26" height="30"><polyline points="7.0,16.0 13.0,10.0 19.0,16.0" fill="none" stroke="#b0aeaa" stroke-width="2.3"/></svg>
<svg class="a" style="left:0;top:107px" width="26" height="30"><polyline points="7.0,12.0 13.0,18.0 19.0,12.0" fill="none" stroke="#000" stroke-width="2.3"/></svg>
</div>
<div class="thumb" style="left:552px;top:1251px;width:30px;height:68px"></div>
<div class="a" style="left:562.0px;top:1277.0px;width:10px;height:2px;background:#3d5f8c"></div>
<div class="a" style="left:562.0px;top:1283.0px;width:10px;height:2px;background:#3d5f8c"></div>
<div class="a" style="left:562.0px;top:1289.0px;width:10px;height:2px;background:#3d5f8c"></div>
<div class="a" style="left:22px;top:1362px;width:530px;height:30px;border:2px solid #9a9894;border-radius:5px;background:#d6d4d2;overflow:hidden">
<div class="a" style="left:0;top:0;width:28px;height:26px;background:linear-gradient(#fefefe,#e9e8e6);border-right:2px solid #8d8b87"></div>
<div class="a" style="left:498px;top:0;width:28px;height:26px;background:linear-gradient(#fefefe,#e9e8e6);border-left:2px solid #8d8b87"></div>
<svg class="a" style="left:0;top:0" width="28" height="26"><polyline points="17,7 11,13 17,19" fill="none" stroke="#b0aeaa" stroke-width="2.4"/></svg>
<svg class="a" style="left:498px;top:0" width="28" height="26"><polyline points="12,7 18,13 12,19" fill="none" stroke="#000" stroke-width="2.6"/></svg>
<div class="thumb" style="left:28px;top:-2px;width:86px;height:30px;background:linear-gradient(#a9c6ea,#8eb0dd 50%,#7fa4d6)"></div>
<div class="a" style="left:63px;top:9px;width:2px;height:9px;background:#3d5f8c"></div>
<div class="a" style="left:69px;top:9px;width:2px;height:9px;background:#3d5f8c"></div>
<div class="a" style="left:75px;top:9px;width:2px;height:9px;background:#3d5f8c"></div>
</div>
<div class="a ui" style="left:619px;top:1096px">Stack</div>
<svg class="a" style="left:1538px;top:1098px" width="22" height="22" viewBox="0 0 22 22"><path d="M2 1H20M2 21H20M1 2V20M21 2V20" stroke="#5e5c58" stroke-width="2" fill="none"/><path d="M4.8 8.8H13.2V17.2H4.8Z M8.8 8.8V4.8H17.2V13.2H13.2" stroke="#5e5c58" stroke-width="1.6" fill="none"/></svg>
<svg class="a" style="left:1572px;top:1098px" width="22" height="22" viewBox="0 0 22 22"><path d="M2 1H20M2 21H20M1 2V20M21 2V20" stroke="#5e5c58" stroke-width="2" fill="none"/><path d="M5.5 5.5L16.5 16.5M16.5 5.5L5.5 16.5" stroke="#6b6965" stroke-width="3.8" fill="none"/></svg>
<svg class="a" style="left:606px;top:1232px" width="12" height="36"><rect x="1" y="2" width="2" height="1.5" fill="#fbfbfa"/><rect x="0" y="0" width="2" height="2" fill="#9a9894"/><rect x="1" y="8" width="2" height="1.5" fill="#fbfbfa"/><rect x="0" y="6" width="2" height="2" fill="#9a9894"/><rect x="1" y="14" width="2" height="1.5" fill="#fbfbfa"/><rect x="0" y="12" width="2" height="2" fill="#9a9894"/><rect x="1" y="20" width="2" height="1.5" fill="#fbfbfa"/><rect x="0" y="18" width="2" height="2" fill="#9a9894"/><rect x="1" y="26" width="2" height="1.5" fill="#fbfbfa"/><rect x="0" y="24" width="2" height="2" fill="#9a9894"/><rect x="1" y="32" width="2" height="1.5" fill="#fbfbfa"/><rect x="0" y="30" width="2" height="2" fill="#9a9894"/><rect x="7" y="2" width="2" height="1.5" fill="#fbfbfa"/><rect x="6" y="0" width="2" height="2" fill="#9a9894"/><rect x="7" y="8" width="2" height="1.5" fill="#fbfbfa"/><rect x="6" y="6" width="2" height="2" fill="#9a9894"/><rect x="7" y="14" width="2" height="1.5" fill="#fbfbfa"/><rect x="6" y="12" width="2" height="2" fill="#9a9894"/><rect x="7" y="20" width="2" height="1.5" fill="#fbfbfa"/><rect x="6" y="18" width="2" height="2" fill="#9a9894"/><rect x="7" y="26" width="2" height="1.5" fill="#fbfbfa"/><rect x="6" y="24" width="2" height="2" fill="#9a9894"/><rect x="7" y="32" width="2" height="1.5" fill="#fbfbfa"/><rect x="6" y="30" width="2" height="2" fill="#9a9894"/></svg>
<div class="a frame" style="left:616px;top:1134px;width:948px;height:280px">
<div class="a m r" style="left:1px;top:0px">00007fff:745a4078</div>
<div class="a m k" style="left:251px;top:0px">00007f740d24a480</div>
<div class="a m" style="left:487px;top:0px"><span class="r">.</span><span class="k">¤$ t</span><span class="r">...</span></div>
<div class="a m k" style="left:611px;top:0px">return to 00007f740d24a480</div>
<div class="a m r" style="left:1px;top:26px">00007fff:745a4080</div>
<div class="a m b" style="left:251px;top:26px">00000000004035f0</div>
<div class="a m" style="left:487px;top:26px"><span class="k">ð5@</span><span class="r">.....</span></div>
<div class="a m r" style="left:1px;top:52px">00007fff:745a4088</div>
<div class="a m k" style="left:251px;top:52px">0000000000010000</div>
<div class="a m r" style="left:487px;top:52px">........</div>
<div class="a m r" style="left:1px;top:78px">00007fff:745a4090</div>
<div class="a m b" style="left:251px;top:78px">0000000000000000</div>
<div class="a m r" style="left:487px;top:78px">........</div>
<div class="a m r" style="left:1px;top:104px">00007fff:745a4098</div>
<div class="a m k" style="left:251px;top:104px">0000000000000000</div>
<div class="a m r" style="left:487px;top:104px">........</div>
<div class="a m r" style="left:1px;top:130px">00007fff:745a40a0</div>
<div class="a m b" style="left:251px;top:130px">0000000000000000</div>
<div class="a m r" style="left:487px;top:130px">........</div>
<div class="a m r" style="left:1px;top:156px">00007fff:745a40a8</div>
<div class="a m k" style="left:251px;top:156px">0000000000000000</div>
<div class="a m r" style="left:487px;top:156px">........</div>
<div class="a m r" style="left:1px;top:182px">00007fff:745a40b0</div>
<div class="a m b" style="left:251px;top:182px">0000000000000000</div>
<div class="a m r" style="left:487px;top:182px">........</div>
<div class="a m r" style="left:1px;top:208px">00007fff:745a40b8</div>
<div class="a m k" style="left:251px;top:208px">0000000000000000</div>
<div class="a m r" style="left:487px;top:208px">........</div>
<div class="a m r" style="left:1px;top:234px">00007fff:745a40c0</div>
<div class="a m b" style="left:251px;top:234px">0000000000000000</div>
<div class="a m r" style="left:487px;top:234px">........</div>
<div class="a" style="left:244px;top:0;width:2px;height:279px;background:#b4b2ae"></div>
<div class="a" style="left:480px;top:0;width:2px;height:279px;background:#b4b2ae"></div>
<div class="a" style="left:604px;top:0;width:2px;height:279px;background:#b4b2ae"></div>
</div>
<div class="a" style="left:1570px;top:1134px;width:30px;height:279px;border:2px solid #9a9894;border-radius:3px;background:linear-gradient(90deg,#d2d0ce,#d8d6d4 40%,#d6d4d2);overflow:hidden">
<div class="a" style="left:0;top:0;width:26px;height:28px;background:linear-gradient(90deg,#fefefe,#f2f2f1 55%,#e3e2e0);border-bottom:2px solid #8d8b87"></div>
<div class="a" style="left:0;top:247px;width:26px;height:28px;background:linear-gradient(90deg,#fefefe,#f2f2f1 55%,#e3e2e0);border-top:2px solid #8d8b87"></div>
<svg class="a" style="left:0;top:0" width="26" height="30"><polyline points="7.0,16.0 13.0,10.0 19.0,16.0" fill="none" stroke="#000" stroke-width="2.3"/></svg>
<svg class="a" style="left:0;top:247px" width="26" height="30"><polyline points="7.0,12.0 13.0,18.0 19.0,12.0" fill="none" stroke="#000" stroke-width="2.3"/></svg>
</div>
<div class="thumb" style="left:1570px;top:1312px;width:30px;height:68px"></div>
<div class="a" style="left:1580.0px;top:1338.0px;width:10px;height:2px;background:#3d5f8c"></div>
<div class="a" style="left:1580.0px;top:1344.0px;width:10px;height:2px;background:#3d5f8c"></div>
<div class="a" style="left:1580.0px;top:1350.0px;width:10px;height:2px;background:#3d5f8c"></div>
<div class="a" style="left:0;top:1414px;width:1600px;height:2px;background:#c3c1bd"></div>
<div class="a" style="left:0;top:1416px;width:1600px;height:2px;background:#fbfbfa"></div>
<div class="a ui" style="left:13px;top:1425px">paused</div>
<svg class="a" style="left:1574px;top:1438px" width="24" height="24"><rect x="18" y="2" width="2" height="2" fill="#8f8d89"/><rect x="12" y="8" width="2" height="2" fill="#8f8d89"/><rect x="18" y="8" width="2" height="2" fill="#8f8d89"/><rect x="6" y="14" width="2" height="2" fill="#8f8d89"/><rect x="12" y="14" width="2" height="2" fill="#8f8d89"/><rect x="18" y="14" width="2" height="2" fill="#8f8d89"/><rect x="0" y="20" width="2" height="2" fill="#8f8d89"/><rect x="6" y="20" width="2" height="2" fill="#8f8d89"/><rect x="12" y="20" width="2" height="2" fill="#8f8d89"/><rect x="18" y="20" width="2" height="2" fill="#8f8d89"/></svg>
<div class="a" style="left:6px;top:0;width:1412px;height:2px;background:#fdfdfd"></div>
<div class="a" style="left:0;top:7px;width:2px;height:50px;background:linear-gradient(#fefefe,#f1f0ee 50%,#e6e5e3)"></div>
<div class="a" style="left:0;top:0;width:2px;height:2px;background:#000"></div><div class="a" style="left:2px;top:0;width:4px;height:2px;background:#777"></div><div class="a" style="left:0;top:2px;width:2px;height:4px;background:#888"></div>
<div class="a" style="left:1596px;top:0;width:6px;height:3px;background:#111"></div>
<div class="a" style="left:1600px;top:0;width:2px;height:1470px;background:#8c8a86"></div>
<div class="a" style="left:0;top:1468px;width:1602px;height:2px;background:#8c8a86"></div>
</body></html>
